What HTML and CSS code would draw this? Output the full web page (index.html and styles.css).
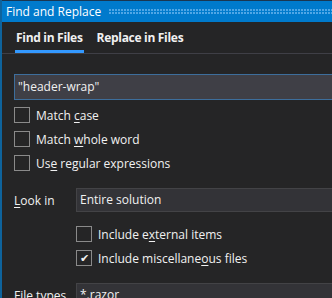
FILE: index.html
```html
<!DOCTYPE html>
<html lang="en">
<head>
	<meta charset="UTF-8">
	<title>Find and Replace</title>
	<link rel="stylesheet" href="styles.css">
</head>
<body>
	<div class="window">
		<!-- title bar -->
		<header class="titlebar">
			<span class="title">Find and Replace</span>
			<span class="grip"></span>
		</header>

		<!-- tabs -->
		<nav class="tabs">
			<a href="#" class="tab on">Find in Files</a>
			<a href="#" class="tab">Replace in Files</a>
		</nav>

		<section class="body">
			<div class="field query">"header-wrap"</div>

			<ul class="checks">
				<li><span class="box"></span><span>Match <u>c</u>ase</span></li>
				<li><span class="box"></span><span>Match <u>w</u>hole word</span></li>
				<li><span class="box"></span><span>Us<u>e</u> regular expressions</span></li>
			</ul>

			<div class="row look">
				<label class="lbl"><u>L</u>ook in</label>
				<div class="field combo">Entire solution</div>
			</div>

			<ul class="checks sub">
				<li><span class="box"></span><span>Include e<u>x</u>ternal items</span></li>
				<li><span class="box checked">&#10004;</span><span>Include miscellane<u>o</u>us files</span></li>
			</ul>

			<div class="row types">
				<label class="lbl">File types</label>
				<div class="field combo">*.razor</div>
			</div>
		</section>
	</div>
</body>
</html>
```

FILE: styles.css
```css
html,body,ul{
	margin: 0;
	padding: 0;
}
body{
	background-color: #252526;
	color: #f1f1f1;
	font-family: "Open Sans", "Noto Sans", sans-serif;
	font-size: 12px;
	overflow: hidden;
}
ul{
	list-style: none;
}
u{
	text-underline-offset: 2px;
}

/* window frame */
.window{
	height: 298px;
	overflow: hidden;
	border-left: 2px solid #0e639c;
	box-sizing: border-box;
}

/* title bar */
.titlebar{
	display: flex;
	align-items: center;
	gap: 8px;
	height: 21px;
	margin-left: -2px;
	padding-left: 6px;
	border-top: 1px solid #1b3650;
	background: #007acc;
	color: #fff;
}
.grip{
	flex: 1;
	height: 6px;
	background-image: radial-gradient(circle at 1px 1px, #4fa6e6 0.9px, transparent 1.1px);
	background-size: 3px 3px;
}

/* tabs */
.tabs{
	display: flex;
	gap: 12px;
	height: 31px;
	padding-left: 13px;
	border-bottom: 1px solid #3f3f46;
}
.tab{
	display: flex;
	align-items: center;
	padding: 3px 1px 0;
	color: #f1f1f1;
	text-decoration: none;
	font-weight: bold;
	letter-spacing: -0.3px;
	border-bottom: 3px solid transparent;
}
.tab.on{
	border-bottom-color: #3399ff;
}

/* form */
.body{
	padding: 20px 0 0 12px;
}
.field{
	height: 24px;
	line-height: 22px;
	padding-left: 3px;
	box-sizing: border-box;
	white-space: nowrap;
}
.query{
	height: 26px;
	line-height: 24px;
	background: #3f3f46;
	border: 1px solid #3d6e9c;
	border-right: 0;
}
.combo{
	flex: 1;
	background: #333337;
	border: 1px solid #434346;
	border-right: 0;
}

.checks{
	padding-top: 3px;
}
.checks li{
	display: flex;
	align-items: center;
	gap: 6px;
	height: 24px;
}
.box{
	width: 14px;
	height: 14px;
	border: 1px solid #8a8a8a;
	font-size: 11px;
	line-height: 14px;
	text-align: center;
}
.checks.sub{
	padding: 10px 0 0 62px;
}

.row{
	display: flex;
	align-items: center;
}
.lbl{
	width: 62px;
}
.look{
	margin-top: 13px;
}
.types{
	margin-top: 13px;
}
```
